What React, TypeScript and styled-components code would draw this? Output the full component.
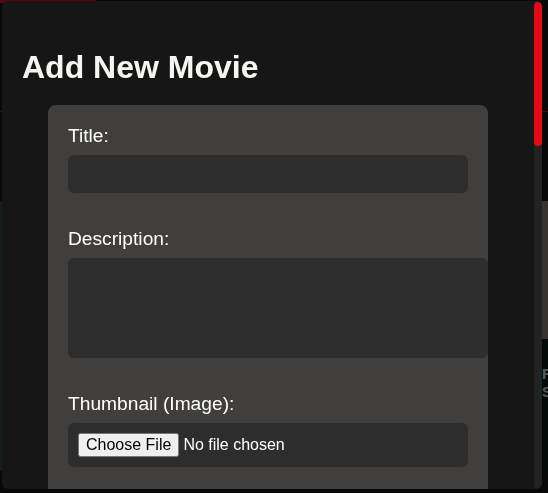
import * as React from "react";
import styled, { createGlobalStyle } from "styled-components";

const GlobalStyle = createGlobalStyle`
  html, body {
    margin: 0;
    padding: 0;
    background: #141414;
    font-family: "Liberation Sans", Arial, sans-serif;
    overflow: hidden;
  }
  * {
    box-sizing: border-box;
  }
`;

// ---- page behind the modal ----

const Page = styled.div`
  height: 100vh;
  background: #141414;
  overflow: hidden;
`;

const Header = styled.header`
  height: 112px;
  border-bottom: 1px solid #e50914;
`;

const Accent = styled.div`
  width: 96px;
  height: 3px;
  background: #e50914;
`;

const MovieRow = styled.div`
  display: grid;
  grid-template-columns: 260px 270px 270px;
  margin-top: 89px;
  overflow: hidden;
`;

const MovieCard = styled.div<{ $tone: string }>`
  height: 270px;
  background: ${(p) => p.$tone};
  display: flex;
  flex-direction: column;
`;

const Poster = styled.div<{ $tone: string }>`
  height: 138px;
  background: ${(p) => p.$tone};
`;

const MovieInfo = styled.div`
  padding: 26px 12px;
  color: #ddd;
  font-weight: bold;
  font-size: 15px;
  line-height: 18px;
`;

// ---- modal ----

const Overlay = styled.div`
  position: fixed;
  inset: 0;
  background: rgba(0, 0, 0, 0.6);
  display: flex;
  align-items: flex-start;
  justify-content: flex-start;
  padding: 1px 6px 4px 2px;
`;

const Modal = styled.div`
  position: relative;
  width: 540px;
  height: 488px;
  background: #161616;
  border-radius: 6px;
  overflow: hidden;
`;

const ModalBody = styled.div`
  height: 100%;
  padding: 24px 28px 24px 20px;
  overflow-y: auto;
  scrollbar-width: none;
`;

const ScrollTrack = styled.div`
  position: absolute;
  top: 0;
  right: 0;
  bottom: 0;
  width: 8px;
  background: #222;
  border-radius: 4px;
`;

const ScrollThumb = styled.div`
  height: 144px;
  margin-top: 1px;
  background: #e50914;
  border-radius: 4px;
`;

const Heading = styled.h1`
  margin: 24px 0 19px;
  font-size: 32px;
  font-weight: bold;
  color: #f5f5f1;
`;

const Form = styled.form`
  width: 440px;
  margin: 0 auto;
  background: #403f3d;
  border-radius: 8px;
  padding: 20px;
`;

const Group = styled.div`
  margin-bottom: 35px;

  &:last-child {
    margin-bottom: 0;
  }
`;

const Label = styled.label`
  display: block;
  margin-bottom: 8px;
  font-size: 1.2rem;
  color: #fff;
`;

const Field = styled.input`
  display: block;
  width: 100%;
  padding: 10px;
  border: none;
  border-radius: 6px;
  background: #2d2d2d;
  color: #fff;
  font-family: inherit;
  font-size: 16px;
  outline: none;
`;

const TextArea = styled.textarea`
  display: block;
  box-sizing: content-box;
  width: 100%;
  height: 80px;
  padding: 10px;
  border: none;
  border-radius: 6px;
  background: #2d2d2d;
  color: #fff;
  font-family: inherit;
  font-size: 16px;
  resize: none;
  outline: none;
`;

const Submit = styled.button`
  width: 100%;
  height: 48px;
  border: none;
  border-radius: 6px;
  background: #e50914;
  color: #fff;
  font-family: inherit;
  font-size: 18px;
  font-weight: bold;
  cursor: pointer;
`;

const textFields = [
  "Genre:",
  "Release Year:",
  "Duration (minutes):",
  "Rating:",
  "Director:",
];

export default function App() {
  return (
    <>
      <GlobalStyle />
      <Page>
        <Header>
          <Accent />
        </Header>
        <MovieRow>
          <MovieCard $tone="#324f4a" />
          <MovieCard $tone="#1f1f1f" />
          <MovieCard $tone="#0c1a16">
            <Poster $tone="#8c7c71" />
            <MovieInfo>
              Fast Lane
              <br />
              Sci-Fi
            </MovieInfo>
          </MovieCard>
        </MovieRow>
      </Page>

      <Overlay>
        <Modal>
          <ModalBody>
            <Heading>Add New Movie</Heading>
            <Form onSubmit={(e) => e.preventDefault()}>
              <Group>
                <Label>Title:</Label>
                <Field type="text" />
              </Group>
              <Group>
                <Label>Description:</Label>
                <TextArea />
              </Group>
              <Group>
                <Label>Thumbnail (Image):</Label>
                <Field type="file" accept="image/*" />
              </Group>
              <Group>
                <Label>Video File:</Label>
                <Field type="file" accept="video/*" />
              </Group>
              {textFields.map((label) => (
                <Group key={label}>
                  <Label>{label}</Label>
                  <Field type="text" />
                </Group>
              ))}
              <Group>
                <Label>Cast:</Label>
                <TextArea />
              </Group>
              <Group>
                <Submit type="submit">Add Movie</Submit>
              </Group>
            </Form>
          </ModalBody>
          <ScrollTrack>
            <ScrollThumb />
          </ScrollTrack>
        </Modal>
      </Overlay>
    </>
  );
}
